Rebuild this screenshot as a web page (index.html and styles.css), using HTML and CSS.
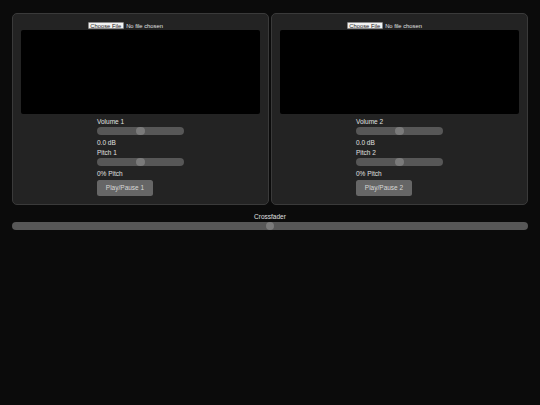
FILE: index.html
```html
<!DOCTYPE html>
<html lang="en">
<head>
<meta charset="utf-8">
<title>DJ Mixer</title>
<link rel="stylesheet" href="styles.css">
</head>
<body>
<div class="decks">
  <section class="deck">
    <input class="file" type="file" accept="video/*,audio/*">
    <div class="video"></div>
    <div class="controls">
      <label class="lbl first">Volume 1</label>
      <input class="range" type="range" min="-30" max="30" value="0">
      <span class="lbl gap">0.0 dB</span>
      <label class="lbl">Pitch 1</label>
      <input class="range" type="range" min="-50" max="50" value="0">
      <span class="lbl gap">0% Pitch</span>
      <button class="play" type="button">Play/Pause 1</button>
    </div>
  </section>
  <section class="deck">
    <input class="file" type="file" accept="video/*,audio/*">
    <div class="video"></div>
    <div class="controls">
      <label class="lbl first">Volume 2</label>
      <input class="range" type="range" min="-30" max="30" value="0">
      <span class="lbl gap">0.0 dB</span>
      <label class="lbl">Pitch 2</label>
      <input class="range" type="range" min="-50" max="50" value="0">
      <span class="lbl gap">0% Pitch</span>
      <button class="play" type="button">Play/Pause 2</button>
    </div>
  </section>
</div>
<div class="xfade">
  <label class="lbl">Crossfader</label>
  <input class="range wide" type="range" min="0" max="100" value="50">
</div>
</body>
</html>
```
FILE: styles.css
```css
html, body {
  margin: 0;
  background: #0b0b0b;
}
body {
  padding: 12.5px 12px 0;
  font-family: "Liberation Sans", Arial, sans-serif;
  font-size: 6.5px;
  line-height: 7.5px;
  color: #e0e0e0;
}
.decks {
  display: flex;
  gap: 2px;
}
.deck {
  flex: 1;
  background: #232323;
  border: 1px solid #3a3a3a;
  border-radius: 5px;
  padding: 8px;
  display: flex;
  flex-direction: column;
}
.file {
  display: block;
  width: 105px;
  height: 7.6px;
  margin: 0 auto;
  padding: 0;
  font-family: "Liberation Sans", Arial, sans-serif;
  font-size: 5.8px;
  line-height: 7.6px;
  color: #e0e0e0;
}
.file::file-selector-button {
  font-family: "Liberation Sans", Arial, sans-serif;
  font-size: 5.8px;
  height: 7.6px;
  line-height: 6px;
  padding: 0 1.3px;
  margin: 0 2.6px 0 0;
  background: #f2f2f2;
  color: #222;
  border: 0.5px solid #8a8a8a;
  border-radius: 1px;
}
.video {
  margin-top: 0.7px;
  height: 84px;
  background: #000;
  border-radius: 2px;
}
.controls {
  width: 87px;
  margin: 0 auto;
  display: flex;
  flex-direction: column;
  align-items: flex-start;
}
.lbl {
  display: block;
  line-height: 7.5px;
}
.lbl.first {
  margin-top: 4px;
}
.lbl.gap {
  margin-top: 4px;
  margin-bottom: 2.6px;
}
.range {
  -webkit-appearance: none;
  appearance: none;
  display: block;
  width: 87px;
  height: 8px;
  margin: 1.5px 0 0;
  padding: 0;
  background: #575757;
  border-radius: 4px;
  outline: none;
}
.range::-webkit-slider-thumb {
  -webkit-appearance: none;
  appearance: none;
  width: 8.5px;
  height: 8.5px;
  border-radius: 50%;
  background: #7a7a7a;
  border: none;
}
.play {
  margin: 0;
  height: 16px;
  width: 56px;
  padding: 0;
  background: #666;
  color: #d8d8d8;
  border: none;
  border-radius: 2.5px;
  font-family: "Liberation Sans", Arial, sans-serif;
  font-size: 6.5px;
}
.xfade {
  margin-top: 8.3px;
  display: flex;
  flex-direction: column;
  align-items: center;
}
.range.wide {
  width: 100%;
  margin-top: 1.2px;
}
```
